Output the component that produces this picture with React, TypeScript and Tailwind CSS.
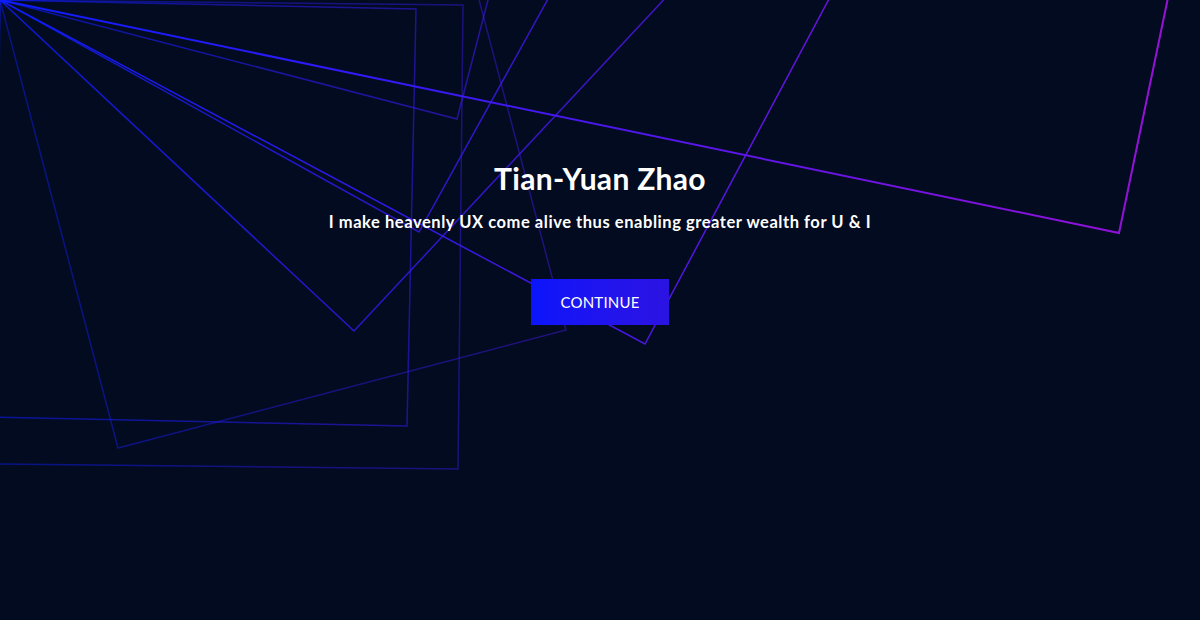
import { useState } from 'react';

type Square = { points: string; opacity: number; width: number };

// rotated squares all hinged at the top-left corner
const squares: Square[] = [
  { points: '0,0 463,5 458,469 -5,464', opacity: 0.45, width: 1.5 },
  { points: '0,0 416,9 407,426 -9,417', opacity: 0.55, width: 1.5 },
  { points: '0,0 119,-457 576,-338 457,119', opacity: 0.6, width: 1.5 },
  { points: '0,0 448,-118 566,330 118,448', opacity: 0.45, width: 1.5 },
  { points: '0,0 331,-354 685,-23 354,331', opacity: 0.8, width: 1.5 },
  { points: '0,0 232,-419 651,-187 419,232', opacity: 0.8, width: 1.5 },
  { points: '0,0 344,-645 989,-301 645,344', opacity: 0.95, width: 1.5 },
  { points: '0,0 233,-1119 1352,-886 1119,233', opacity: 1, width: 2 },
];

const Background = () => (
  <svg className="absolute inset-0 h-full w-full" viewBox="0 0 1200 620" preserveAspectRatio="xMinYMin slice">
    <defs>
      <linearGradient id="stroke" gradientUnits="userSpaceOnUse" x1="0" y1="0" x2="1200" y2="0">
        <stop offset="0" stopColor="#0d1cff" />
        <stop offset="0.5" stopColor="#4a17ec" />
        <stop offset="1" stopColor="#9c10d6" />
      </linearGradient>
    </defs>
    {squares.map((sq, i) => (
      <polygon
        key={i}
        points={sq.points}
        fill="none"
        stroke="url(#stroke)"
        strokeWidth={sq.width}
        strokeOpacity={sq.opacity}
      />
    ))}
  </svg>
);

export default function App() {
  const [clicked, setClicked] = useState(false);

  return (
    <div className="relative h-[620px] w-full overflow-hidden bg-[#020b1f] font-['Lato',sans-serif] text-white">
      <Background />
      <div className="relative z-10 flex flex-col items-center pt-[160px]">
        <h1 className="text-[30px] font-bold leading-9 tracking-[0.3px]">Tian-Yuan Zhao</h1>
        <p className="mt-[14px] text-[16.5px] font-bold leading-6 tracking-[0.55px]">
          I make heavenly UX come alive thus enabling greater wealth for U &amp; I
        </p>
        <button
          onClick={() => setClicked(!clicked)}
          className="mt-[45px] flex h-[46px] w-[138px] items-center justify-center bg-gradient-to-r from-[#0a15fb] to-[#2b13e2] text-[15px] font-normal tracking-[0.2px] text-white"
        >
          CONTINUE
        </button>
      </div>
    </div>
  );
}
